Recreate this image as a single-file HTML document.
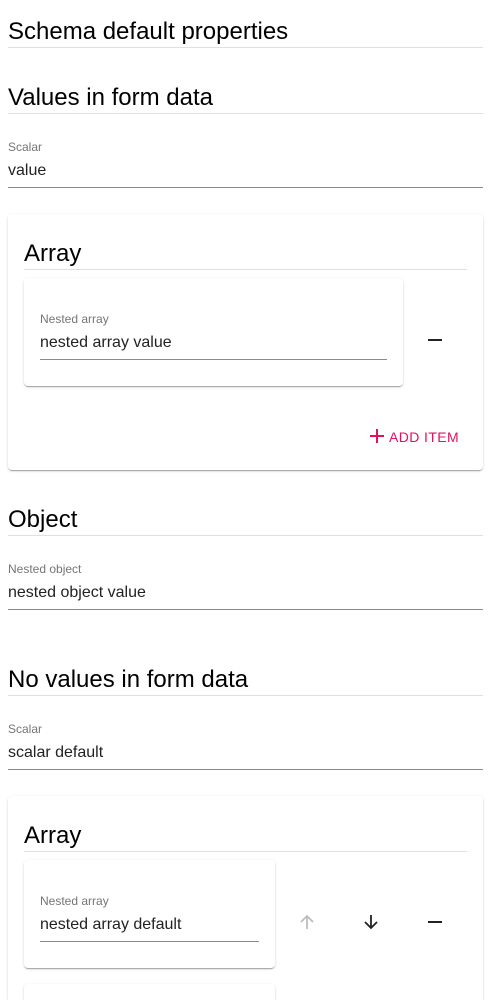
<!DOCTYPE html><html style="height:1000px;overflow:hidden"><head><style>
body{margin:0;background:#fff;font-family:"Liberation Sans",sans-serif;color:rgba(0,0,0,.87);width:491px;height:1000px;overflow:hidden;position:relative}
.a{position:absolute;white-space:nowrap}
.h{font-size:24px;line-height:28px;color:#000}
.hl{position:absolute;height:1px;background:#e0e0e0}
.lb{font-size:12px;color:#757575}
.v{font-size:16px;color:#222}
.ul{position:absolute;height:1px;background:#8a8a8a}
.card{position:absolute;background:#fff;border-radius:4px;box-shadow:0 2px 1px -1px rgba(0,0,0,.2),0 1px 1px 0 rgba(0,0,0,.14),0 1px 3px 0 rgba(0,0,0,.12)}
</style></head><body>
<div class="a h" style="left:8px;top:18px">Schema default properties</div>
<div class="hl" style="left:8px;width:475px;top:47px"></div>
<div class="a h" style="left:8px;top:84px">Values in form data</div>
<div class="hl" style="left:8px;width:475px;top:113px"></div>
<div class="a lb" style="left:8px;top:140px">Scalar</div>
<div class="a v" style="left:8px;top:162px">value</div>
<div class="ul" style="left:8px;width:475px;top:187px"></div>

<div class="card" style="left:8px;top:214px;width:475px;height:256px"></div>
<div class="a h" style="left:24px;top:240px">Array</div>
<div class="hl" style="left:24px;width:443px;top:269px"></div>
<div class="card" style="left:24px;top:278px;width:379px;height:108px"></div>
<div class="a lb" style="left:40px;top:312px">Nested array</div>
<div class="a v" style="left:40px;top:334px">nested array value</div>
<div class="ul" style="left:40px;width:347px;top:359px"></div>
<div class="a" style="left:428px;top:339px;width:14px;height:2px;background:#222"></div>
<svg class="a" style="left:369px;top:428px" width="16" height="16" viewBox="0 0 16 16"><path d="M8 1v14M1 8h14" stroke="#e0115f" stroke-width="2"/></svg>
<div class="a" style="left:389px;top:429px;font-size:14px;letter-spacing:.4px;color:#e0115f">ADD ITEM</div>

<div class="a h" style="left:8px;top:506px">Object</div>
<div class="hl" style="left:8px;width:475px;top:535px"></div>
<div class="a lb" style="left:8px;top:562px">Nested object</div>
<div class="a v" style="left:8px;top:584px">nested object value</div>
<div class="ul" style="left:8px;width:475px;top:609px"></div>

<div class="a h" style="left:8px;top:666px">No values in form data</div>
<div class="hl" style="left:8px;width:475px;top:695px"></div>
<div class="a lb" style="left:8px;top:722px">Scalar</div>
<div class="a v" style="left:8px;top:744px">scalar default</div>
<div class="ul" style="left:8px;width:475px;top:769px"></div>

<div class="card" style="left:8px;top:796px;width:475px;height:204px;border-radius:4px 4px 0 0"></div>
<div class="a h" style="left:24px;top:822px">Array</div>
<div class="hl" style="left:24px;width:443px;top:851px"></div>
<div class="card" style="left:24px;top:860px;width:251px;height:108px"></div>
<div class="a lb" style="left:40px;top:894px">Nested array</div>
<div class="a v" style="left:40px;top:916px">nested array default</div>
<div class="ul" style="left:40px;width:219px;top:941px"></div>
<svg class="a" style="left:299px;top:914px" width="16" height="16" viewBox="0 0 16 16"><path d="M8 15V2M2 8l6-6 6 6" stroke="#bdbdbd" stroke-width="1.8" fill="none"/></svg>
<svg class="a" style="left:363px;top:914px" width="16" height="16" viewBox="0 0 16 16"><path d="M8 1v13M2 8l6 6 6-6" stroke="#222" stroke-width="1.8" fill="none"/></svg>
<div class="a" style="left:428px;top:921px;width:14px;height:2px;background:#222"></div>
<div class="card" style="left:24px;top:984px;width:251px;height:16px;border-radius:4px 4px 0 0"></div>
</body></html>
